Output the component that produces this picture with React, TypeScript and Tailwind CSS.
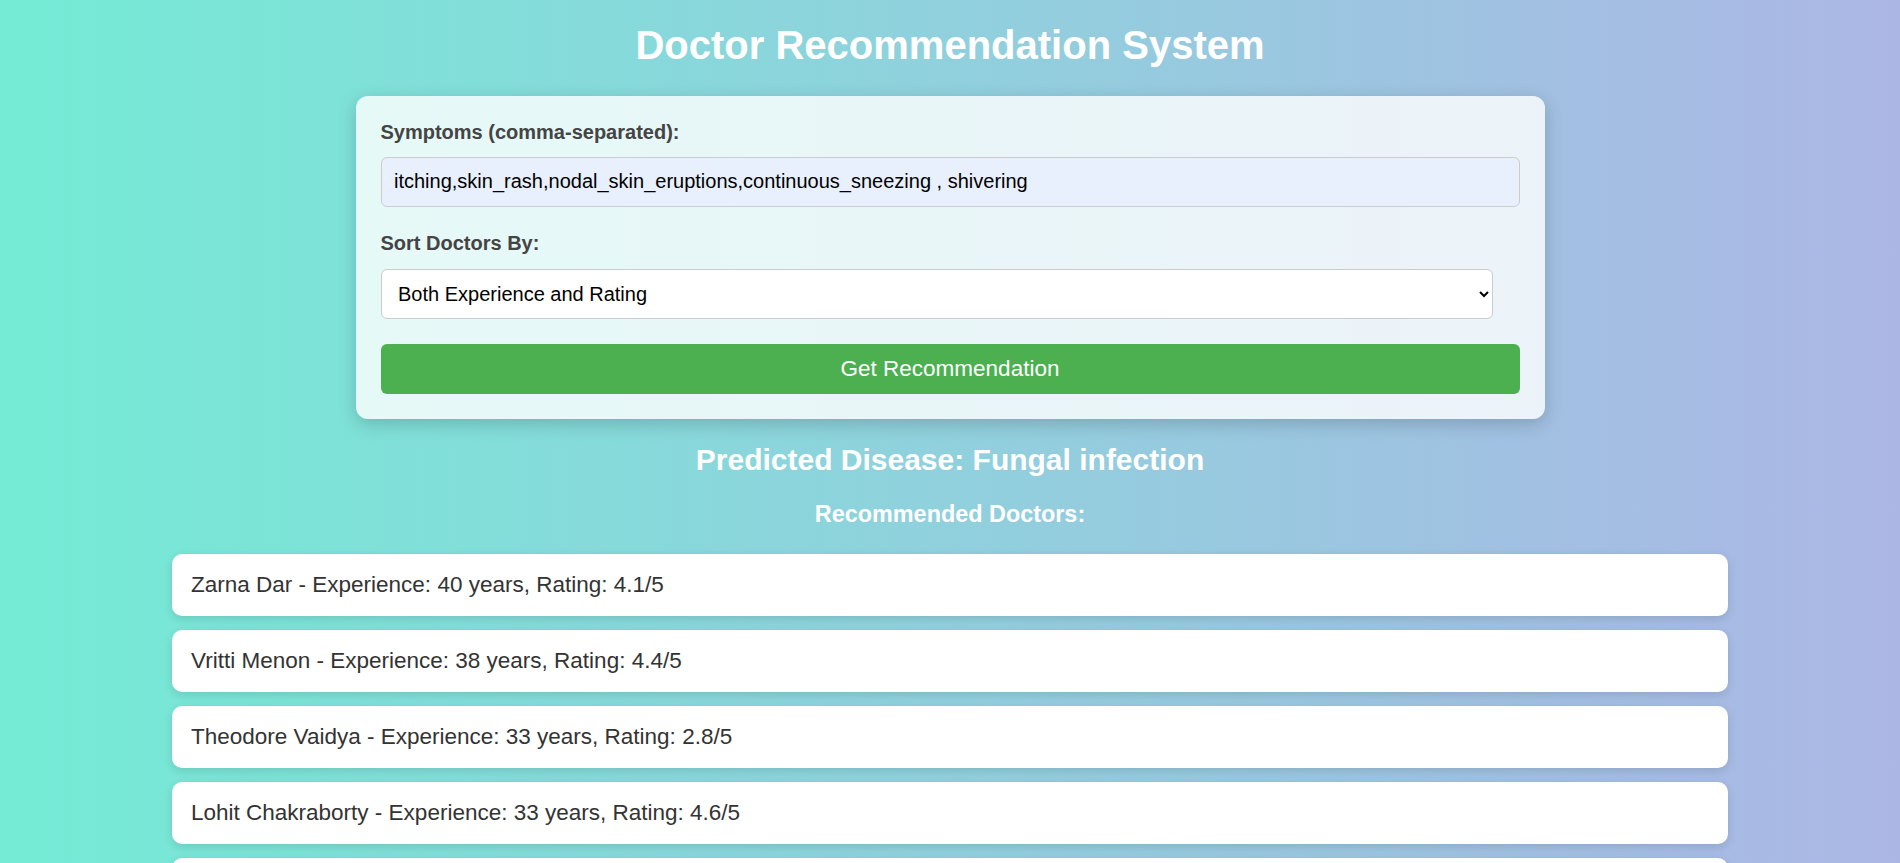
import React from "react";

const doctors = [
  { name: "Zarna Dar", exp: 40, rating: 4.1 },
  { name: "Vritti Menon", exp: 38, rating: 4.4 },
  { name: "Theodore Vaidya", exp: 33, rating: 2.8 },
  { name: "Lohit Chakraborty", exp: 33, rating: 4.6 },
  { name: "Ishaan Kapoor", exp: 31, rating: 3.9 },
  { name: "Meera Iyer", exp: 29, rating: 4.2 },
];

const App: React.FC = () => {
  return (
    <div className="min-h-screen bg-[linear-gradient(to_right,#74ebd5,#acb6e5)] font-['Liberation_Sans',Arial,sans-serif] flex flex-col items-center pt-[22px] pb-10">
      <h1 className="text-[40px] leading-[46px] font-bold text-white">Doctor Recommendation System</h1>

      <div className="w-[1189px] mt-[28px] bg-white/80 rounded-[12px] p-[25px] shadow-[0_5px_18px_rgba(0,0,0,0.18)]">
        <label className="block text-[20px] leading-[23px] font-bold text-[#444] mb-[12.5px]">
          Symptoms (comma-separated):
        </label>
        <input
          type="text"
          defaultValue="itching,skin_rash,nodal_skin_eruptions,continuous_sneezing , shivering"
          className="block w-full h-[50px] px-[12.5px] text-[20px] text-black bg-[#e8f0fe] border border-[#ccc] rounded-[6px] mb-[25px] outline-none"
        />
        <label className="block text-[20px] leading-[23px] font-bold text-[#444] mb-[14px]">
          Sort Doctors By:
        </label>
        <select
          defaultValue="both"
          className="block w-[1112px] h-[50px] px-[12.5px] text-[20px] text-black bg-white border border-[#ccc] rounded-[6px] mb-[25px] outline-none"
        >
          <option value="experience">Experience</option>
          <option value="rating">Rating</option>
          <option value="both">Both Experience and Rating</option>
        </select>
        <button className="block w-full h-[50px] bg-[#4caf50] text-white text-[22.5px] rounded-[6px]">
          Get Recommendation
        </button>
      </div>

      <h2 className="mt-[24px] text-[30px] leading-[34.5px] font-bold text-white">
        Predicted Disease: Fungal infection
      </h2>
      <h3 className="mt-[23.5px] text-[23.4px] leading-[27px] font-bold text-white">Recommended Doctors:</h3>

      <ul className="w-[1556px] mt-[26px] flex flex-col gap-[14px]">
        {doctors.map((d) => (
          <li
            key={d.name}
            className="h-[62px] flex items-center px-[19px] bg-white rounded-[10px] text-[22.5px] text-[#333] shadow-[0_3px_10px_rgba(0,0,0,0.12)]"
          >
            {d.name} - Experience: {d.exp} years, Rating: {d.rating}/5
          </li>
        ))}
      </ul>
    </div>
  );
};

export default App;
